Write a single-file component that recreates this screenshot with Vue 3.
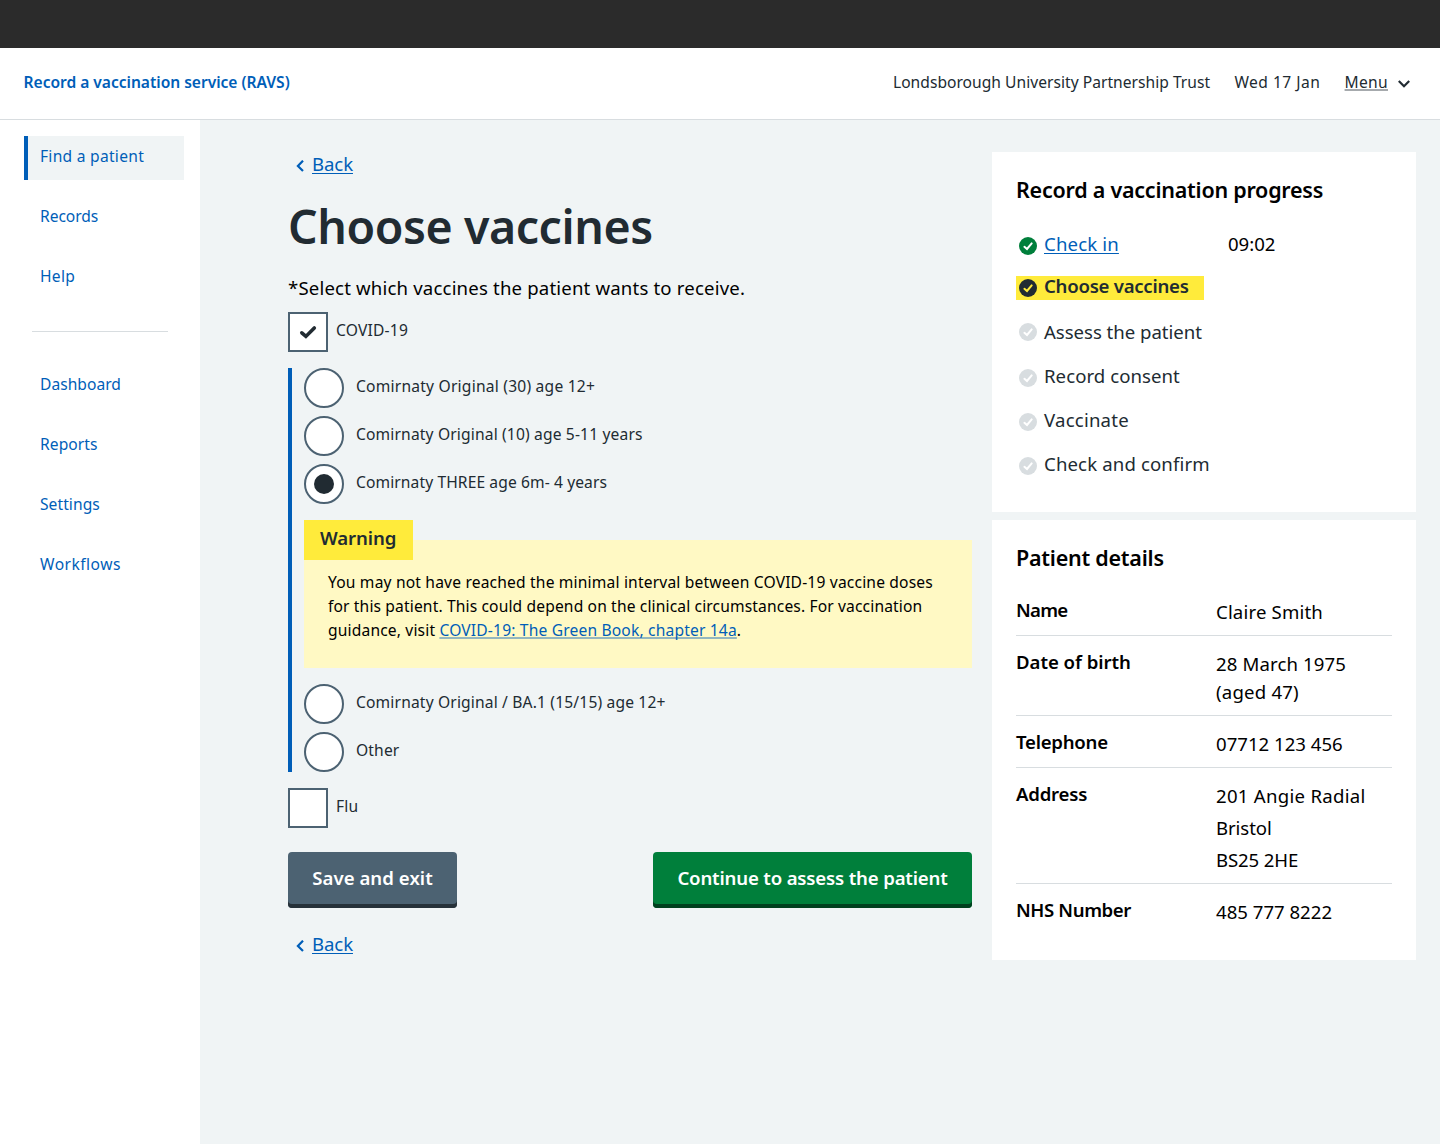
<script setup>
import { ref } from 'vue'

const nav = [
  [
    { label: 'Find a patient', active: true, tracking: 0.27 },
    { label: 'Records', tracking: -0.05 },
    { label: 'Help', tracking: 0.3 },
  ],
  [
    { label: 'Dashboard', tracking: 0.02 },
    { label: 'Reports', tracking: 0.08 },
    { label: 'Settings', tracking: 0.06 },
    { label: 'Workflows', tracking: 0.47 },
  ],
]

const selected = ref('three')
const covid = ref(true)
const flu = ref(false)

const optionsBefore = [
  { id: 'original30', label: 'Comirnaty Original (30) age 12+', tracking: 0.22 },
  { id: 'original10', label: 'Comirnaty Original (10) age 5-11 years', tracking: 0.155 },
  { id: 'three', label: 'Comirnaty THREE age 6m- 4 years', tracking: 0.105 },
]
const optionsAfter = [
  { id: 'ba1', label: 'Comirnaty Original / BA.1 (15/15) age 12+', tracking: 0.16 },
  { id: 'other', label: 'Other', tracking: 0.15 },
]

const steps = [
  { label: 'Check in', state: 'done', time: '09:02', tracking: 0.15 },
  { label: 'Choose vaccines', state: 'current', tracking: -0.26 },
  { label: 'Assess the patient', state: 'todo', raised: true, tracking: -0.03 },
  { label: 'Record consent', state: 'todo', tracking: 0.05 },
  { label: 'Vaccinate', state: 'todo', tracking: 0.21 },
  { label: 'Check and confirm', state: 'todo', tracking: 0.13 },
]

const details = [
  { key: 'Name', tracking: -0.7, lines: [['Claire Smith', 0.16]] },
  { key: 'Date of birth', tracking: -0.03, lines: [['28 March 1975', 0.12], ['(aged 47)', 0.2]] },
  { key: 'Telephone', tracking: -0.24, lines: [['07712 123 456', 0]] },
  { key: 'Address', tracking: -0.22, spaced: true, lines: [['201 Angie Radial', 0.28], ['Bristol', -0.08], ['BS25 2HE', -0.13]] },
  { key: 'NHS Number', tracking: -0.39, lines: [['485 777 8222', 0]] },
]

const spacing = (value) => ({ letterSpacing: `${value}px` })
</script>

<template>
  <div class="page">
    <div class="topbar"></div>
    <header class="header">
      <a class="service">Record a vaccination service (RAVS)</a>
      <div class="account">
        <span class="trust">Londsborough University Partnership Trust</span>
        <span class="date">Wed 17 Jan</span>
        <span class="menu">
          <span class="menu-label">Menu</span>
          <svg class="menu-icon" width="12" height="8" viewBox="0 0 12 8">
            <path d="M.8 1 6 6.2 11.2 1" fill="none" stroke="#212b32" stroke-width="2.2" />
          </svg>
        </span>
      </div>
    </header>

    <div class="body">
      <nav class="sidebar">
        <ul v-for="(group, i) in nav" :key="i" class="nav-group">
          <li v-for="item in group" :key="item.label" class="nav-item" :class="{ active: item.active }">
            <a :style="spacing(item.tracking)">{{ item.label }}</a>
          </li>
        </ul>
      </nav>

      <main class="main">
        <section class="form">
          <div class="back">
            <svg width="8" height="12" viewBox="0 0 8 12"><path d="M7 .7 1.9 5.9 7 11.1" fill="none" stroke="#005eb8" stroke-width="2.2" /></svg>
            <a>Back</a>
          </div>
          <h1>Choose vaccines</h1>
          <p class="hint">*Select which vaccines the patient wants to receive.</p>

          <div class="check-row" @click="covid = !covid">
            <span class="box">
              <svg v-if="covid" width="18" height="14" viewBox="0 0 18 14"><path d="M2.8 7.8 6.9 11.4 15.3 3" fill="none" stroke="#212b32" stroke-width="3.6" stroke-linecap="round" /></svg>
            </span>
            <span class="label covid">COVID-19</span>
          </div>

          <div class="nested">
            <div v-for="o in optionsBefore" :key="o.id" class="radio-row" @click="selected = o.id">
              <span class="radio"><i v-if="selected === o.id"></i></span>
              <span class="label" :style="spacing(o.tracking)">{{ o.label }}</span>
            </div>
            <div class="warning">
              <div class="warning-title">Warning</div>
              <div class="warning-body">
                <div class="w1">You may not have reached the minimal interval between COVID-19 vaccine doses</div>
                <div class="w2">for this patient. This could depend on the clinical circumstances. For vaccination</div>
                <div class="w3">guidance, visit <a>COVID-19: The Green Book, chapter 14a</a>.</div>
              </div>
            </div>
            <div v-for="o in optionsAfter" :key="o.id" class="radio-row" @click="selected = o.id">
              <span class="radio"><i v-if="selected === o.id"></i></span>
              <span class="label" :style="spacing(o.tracking)">{{ o.label }}</span>
            </div>
          </div>

          <div class="check-row" @click="flu = !flu">
            <span class="box">
              <svg v-if="flu" width="18" height="14" viewBox="0 0 18 14"><path d="M2.8 7.8 6.9 11.4 15.3 3" fill="none" stroke="#212b32" stroke-width="3.6" stroke-linecap="round" /></svg>
            </span>
            <span class="label flu">Flu</span>
          </div>

          <div class="actions">
            <button class="button secondary">Save and exit</button>
            <button class="button primary">Continue to assess the patient</button>
          </div>
          <div class="back">
            <svg width="8" height="12" viewBox="0 0 8 12"><path d="M7 .7 1.9 5.9 7 11.1" fill="none" stroke="#005eb8" stroke-width="2.2" /></svg>
            <a>Back</a>
          </div>
        </section>

        <aside class="aside">
          <section class="card progress">
            <h2>Record a vaccination progress</h2>
            <ul class="steps">
              <li v-for="s in steps" :key="s.label" class="step" :class="[s.state, { raised: s.raised }]">
                <svg class="tick" width="18" height="18" viewBox="0 0 18 18">
                  <circle cx="9" cy="9" r="9" />
                  <path d="M5.4 9.8 8 12 12.7 6.4" fill="none" stroke-width="2" stroke-linecap="round" />
                </svg>
                <span class="step-label" :style="spacing(s.tracking)">{{ s.label }}</span>
                <span v-if="s.time" class="time">{{ s.time }}</span>
              </li>
            </ul>
          </section>

          <section class="card patient">
            <h2>Patient details</h2>
            <dl>
              <div v-for="d in details" :key="d.key" class="detail">
                <dt :style="spacing(d.tracking)">{{ d.key }}</dt>
                <dd :class="{ spaced: d.spaced }">
                  <span v-for="[text, tracking] in d.lines" :key="text" :style="spacing(tracking)">{{ text }}</span>
                </dd>
              </div>
            </dl>
          </section>
        </aside>
      </main>
    </div>
  </div>
</template>

<style>
body {
  margin: 0;
  background: #fff;
}
</style>

<style scoped>
.page {
  min-height: 1144px;
  display: flex;
  flex-direction: column;
  font-family: 'Noto Sans', 'Open Sans', sans-serif;
  font-size: 15.6px;
  line-height: 24px;
  color: #212b32;
}
ul, dl, dd, h1, h2, p { margin: 0; padding: 0; list-style: none; }
a { color: #005eb8; cursor: pointer; }
svg { display: block; flex: none; }

.topbar { height: 48px; background: #2b2b2b; }
.header {
  box-sizing: border-box;
  height: 72px;
  padding: 22px 30px 0 23.6px;
  border-bottom: 1px solid #d8dde0;
  display: flex;
  justify-content: space-between;
  white-space: nowrap;
}
.service { font-weight: 600; letter-spacing: -0.03px; }
.account { display: flex; gap: 24.3px; }
.trust { letter-spacing: 0.025px; }
.date { letter-spacing: 0.47px; }
.menu { display: flex; gap: 10px; }
.menu-label {
  letter-spacing: 0.3px;
  text-decoration: underline;
  text-decoration-color: rgba(33, 43, 50, 0.4);
  text-decoration-thickness: 2px;
  text-underline-offset: 1px;
}
.menu-icon { margin-top: 9.5px; }

.body { flex: 1; display: flex; }
.sidebar { box-sizing: border-box; width: 200px; padding: 16px 16px 0 24px; }
.nav-group { display: flex; flex-direction: column; gap: 16px; }
.nav-group + .nav-group { margin-top: 31px; }
.nav-group + .nav-group::before {
  content: '';
  height: 1px;
  margin: 0 16px 16px 8px;
  background: #d8dde0;
}
.nav-item { padding: 8px 12px 12px; border-left: 4px solid transparent; white-space: nowrap; }
.nav-item.active { border-color: #005eb8; background: #f0f4f5; }

.main {
  flex: 1;
  display: flex;
  justify-content: space-between;
  padding: 32px 24px 0 88px;
  background: #f0f4f5;
}
.form { width: 684px; white-space: nowrap; }
.back { display: flex; gap: 8px; padding-left: 8px; font-size: 18.6px; }
.back svg { margin-top: 8px; }
.back a {
  letter-spacing: -0.1px;
  text-decoration: underline;
  text-decoration-thickness: 1px;
  text-underline-offset: 2px;
  text-decoration-skip-ink: none;
}
h1 { margin-top: 22px; font-size: 46.5px; line-height: 56px; font-weight: 600; letter-spacing: -0.43px; }
.hint { margin-top: 22px; font-size: 18.6px; letter-spacing: 0.17px; color: #000; }

.check-row { display: flex; gap: 8px; }
.hint + .check-row { margin-top: 12px; }
.box {
  box-sizing: border-box;
  width: 40px;
  height: 40px;
  border: 2px solid #4c6272;
  background: #fff;
  display: flex;
  align-items: center;
  justify-content: center;
}
.label { padding-top: 6px; }
.covid { letter-spacing: 0.2px; }
.flu { letter-spacing: 0.2px; }
.nested {
  margin: 16px 0;
  padding-left: 12px;
  border-left: 4px solid #005eb8;
  display: flex;
  flex-direction: column;
  gap: 8px;
}
.radio-row { display: flex; gap: 12px; }
.radio {
  box-sizing: border-box;
  width: 40px;
  height: 40px;
  border: 2px solid #4c6272;
  border-radius: 50%;
  background: #fff;
  display: flex;
  align-items: center;
  justify-content: center;
}
.radio i { width: 20px; height: 20px; border-radius: 50%; background: #212b32; }

.warning {
  margin: 8px 0;
  height: 148px;
  background: linear-gradient(#f0f4f5 20px, #fff9c4 20px);
}
.warning-title {
  box-sizing: border-box;
  width: 109px;
  height: 40px;
  padding: 6px 0 0 16px;
  background: #ffeb3b;
  font-size: 18.6px;
  font-weight: 600;
  letter-spacing: -0.1px;
}
.warning-body { padding: 10px 0 0 24px; color: #000; }
.w1 { letter-spacing: 0.175px; }
.w2 { letter-spacing: 0.14px; }
.w3 { letter-spacing: 0.16px; }
.w3 a {
  letter-spacing: 0.17px;
  text-decoration: underline;
  text-decoration-color: rgba(0, 94, 184, 0.42);
  text-decoration-thickness: 2px;
  text-underline-offset: 1px;
  text-decoration-skip-ink: none;
}

.actions { margin: 24px 0; display: flex; justify-content: space-between; }
.button {
  box-sizing: border-box;
  height: 56px;
  padding: 0 0 4px;
  border: 0;
  border-radius: 4px;
  color: #fff;
  font-family: inherit;
  font-size: 18.6px;
  line-height: 24px;
  font-weight: 600;
}
.secondary { width: 169px; background: #4c6272; box-shadow: inset 0 -4px #263139; letter-spacing: 0.05px; }
.primary { width: 319px; background: #007f3b; box-shadow: inset 0 -4px #00401e; letter-spacing: -0.17px; }

.aside { width: 424px; display: flex; flex-direction: column; gap: 8px; }
.card { box-sizing: border-box; padding: 24px; background: #fff; color: #000; white-space: nowrap; }
.progress { height: 360px; }
.patient { height: 440px; }
h2 { font-size: 21.5px; line-height: 28px; font-weight: 600; letter-spacing: -0.24px; }

.steps { margin-top: 28px; font-size: 18.6px; }
.step { box-sizing: border-box; height: 24px; margin-bottom: 20px; padding-left: 3px; display: flex; }
.tick { margin: 5px 7px 0 0; fill: #d8dde0; stroke: none; }
.tick path { stroke: #fff; }
.step-label { color: #212b32; }
.done .tick { fill: #007f3b; }
.done .step-label {
  box-sizing: border-box;
  color: #005eb8;
  text-decoration: underline;
  text-decoration-thickness: 1px;
  text-underline-offset: 2px;
  margin-right: 109px;
}
.current { width: 188px; background: #ffeb3b; font-weight: 600; }
.current .tick { fill: #212b32; margin-top: 3px; }
.current .tick path { stroke: #ffeb3b; }
.current .step-label { margin-top: -2px; }
.raised .tick { margin-top: 3px; }

.patient dl { margin-top: 12px; font-size: 18.6px; line-height: 28px; }
.detail { display: flex; padding: 12px 0 9px; border-bottom: 1px solid #d8dde0; }
.detail:last-child { border-bottom: 0; }
dt { width: 200px; font-weight: 600; }
dd { padding-top: 2px; display: flex; flex-direction: column; }
.spaced { gap: 4px; }
</style>
